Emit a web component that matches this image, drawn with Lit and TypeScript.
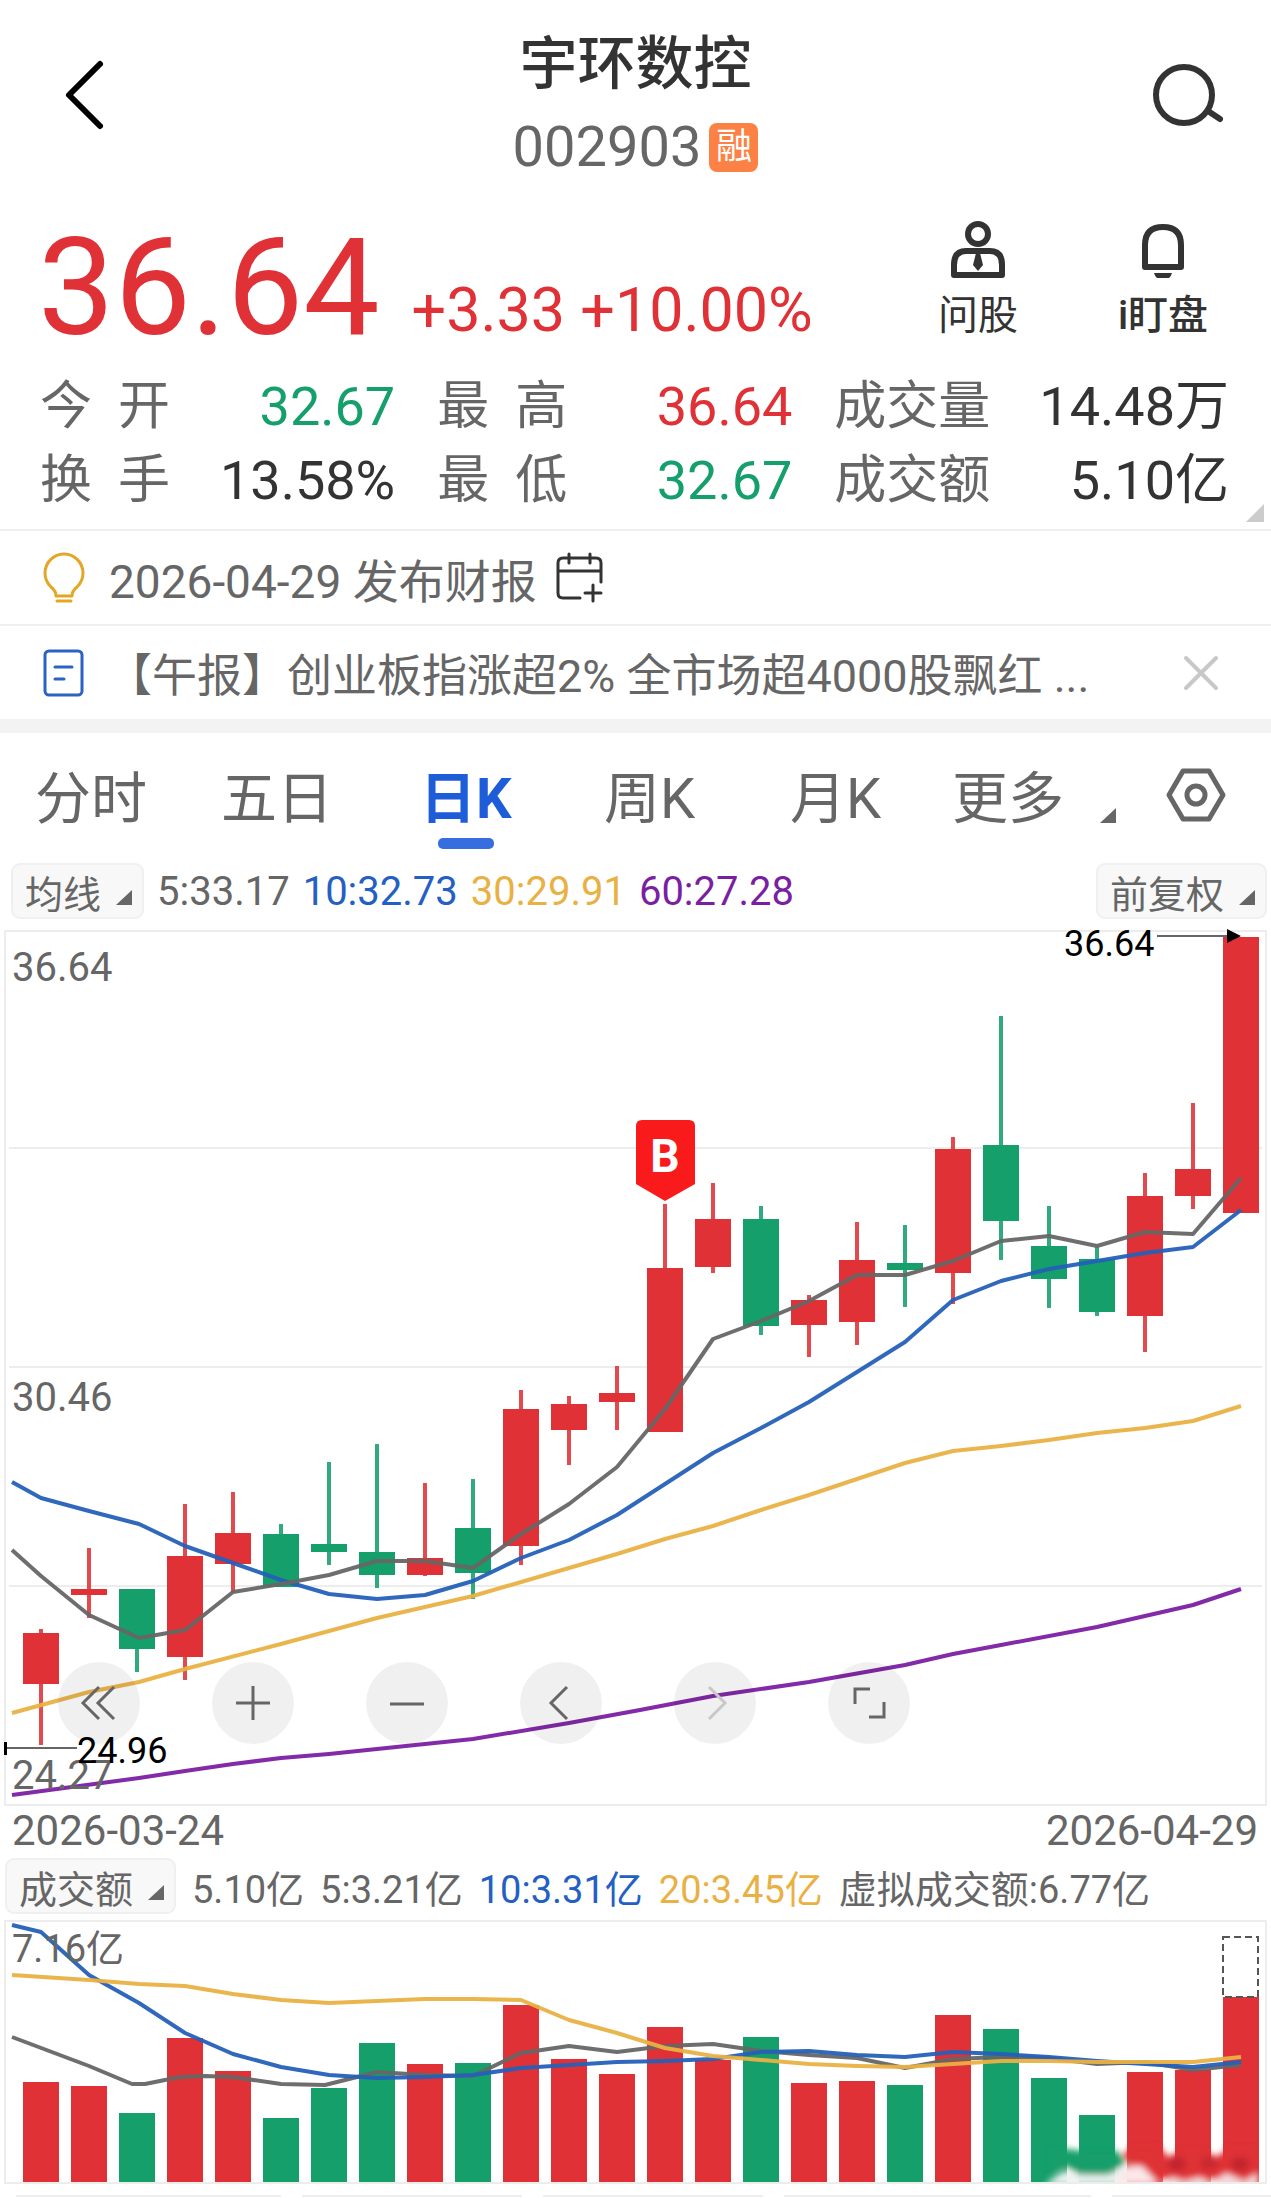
import { LitElement, html, svg, css } from "lit";
import { customElement, property, state } from "lit/decorators.js";
import { classMap } from "lit/directives/class-map.js";

type Candle = [high: number, top: number, bottom: number, low: number, up: 0 | 1];
type Points = number[][];

const RED = "#df3136";
const GREEN = "#149f6b";
const GRAY = "#666666";
const BLUE = "#2460b8";
const ORANGE = "#e9b143";
const PURPLE = "#7b1fa2";

const STEP = 48;
const FIRST = 41;
const BODY = 36;
const at = (i: number) => FIRST + STEP * i;
const path = (p: Points) => p.map((q) => q.join(",")).join(" ");

const candles: Candle[] = [
  [1630, 1634, 1685, 1746, 1],
  [1549, 1590, 1596, 1619, 1],
  [1590, 1590, 1650, 1673, 0],
  [1505, 1557, 1658, 1681, 1],
  [1493, 1534, 1565, 1593, 1],
  [1525, 1535, 1588, 1588, 0],
  [1463, 1545, 1553, 1566, 0],
  [1445, 1553, 1576, 1589, 0],
  [1484, 1559, 1576, 1577, 1],
  [1480, 1529, 1574, 1600, 0],
  [1391, 1410, 1547, 1566, 1],
  [1397, 1405, 1431, 1466, 1],
  [1367, 1394, 1403, 1431, 1],
  [1205, 1269, 1433, 1433, 1],
  [1184, 1220, 1268, 1274, 1],
  [1207, 1220, 1327, 1336, 0],
  [1296, 1301, 1326, 1358, 1],
  [1223, 1261, 1323, 1346, 1],
  [1226, 1264, 1271, 1308, 0],
  [1138, 1150, 1274, 1305, 1],
  [1017, 1146, 1222, 1261, 0],
  [1207, 1247, 1280, 1309, 0],
  [1248, 1260, 1313, 1317, 0],
  [1174, 1197, 1317, 1353, 1],
  [1104, 1170, 1197, 1210, 1],
  [938, 938, 1214, 1214, 1],
];

const ma5: Points = [[12, 1551], [41, 1577], [89, 1616], [139, 1639], [185, 1631], [233, 1593], [281, 1585], [329, 1576], [377, 1562], [425, 1562], [473, 1569], [521, 1535], [569, 1505], [617, 1468], [665, 1410], [713, 1340], [761, 1322], [809, 1302], [857, 1276], [905, 1276], [953, 1262], [1001, 1242], [1049, 1237], [1097, 1247], [1145, 1233], [1193, 1235], [1241, 1179]];
const ma10: Points = [[12, 1483], [41, 1499], [89, 1512], [139, 1525], [185, 1547], [233, 1564], [281, 1581], [329, 1595], [377, 1600], [425, 1596], [473, 1582], [521, 1559], [569, 1541], [617, 1516], [665, 1485], [713, 1454], [761, 1429], [809, 1403], [857, 1373], [905, 1343], [953, 1301], [1001, 1282], [1049, 1270], [1097, 1262], [1145, 1254], [1193, 1248], [1241, 1211]];
const ma30: Points = [[12, 1714], [89, 1693], [139, 1683], [185, 1670], [281, 1645], [377, 1619], [473, 1597], [569, 1569], [617, 1555], [665, 1540], [713, 1527], [761, 1511], [809, 1496], [857, 1480], [905, 1464], [953, 1452], [1001, 1447], [1049, 1441], [1097, 1434], [1145, 1429], [1193, 1422], [1241, 1407]];
const ma60: Points = [[12, 1796], [139, 1779], [185, 1772], [233, 1765], [281, 1759], [329, 1755], [473, 1740], [569, 1724], [640, 1711], [713, 1697], [809, 1683], [905, 1666], [953, 1655], [1001, 1646], [1097, 1628], [1193, 1606], [1241, 1590]];

const bars = [2083, 2087, 2114, 2039, 2072, 2119, 2089, 2044, 2065, 2064, 2006, 2060, 2075, 2028, 2061, 2038, 2084, 2082, 2086, 2016, 2030, 2079, 2116, 2073, 2071, 1998];
const vol5: Points = [[12, 2038], [89, 2067], [132, 2085], [145, 2085], [180, 2078], [205, 2077], [233, 2078], [281, 2085], [325, 2086], [377, 2073], [425, 2076], [473, 2077], [521, 2054], [569, 2047], [617, 2053], [665, 2047], [713, 2045], [761, 2052], [809, 2056], [857, 2059], [905, 2069], [953, 2060], [1001, 2058], [1049, 2059], [1097, 2065], [1145, 2063], [1193, 2071], [1241, 2066]];
const vol10: Points = [[12, 1926], [41, 1933], [89, 1976], [139, 2004], [185, 2034], [233, 2055], [281, 2068], [329, 2076], [377, 2079], [425, 2078], [473, 2076], [521, 2069], [569, 2066], [617, 2063], [665, 2062], [713, 2060], [761, 2053], [809, 2052], [857, 2056], [905, 2058], [953, 2053], [1001, 2055], [1049, 2058], [1097, 2062], [1145, 2065], [1193, 2068], [1241, 2063]];
const vol20: Points = [[12, 1976], [89, 1981], [139, 1985], [185, 1987], [233, 1995], [281, 2001], [329, 2004], [377, 2002], [425, 2000], [473, 2000], [521, 2001], [569, 2021], [617, 2034], [665, 2049], [713, 2057], [761, 2061], [809, 2065], [857, 2067], [905, 2068], [953, 2065], [1001, 2062], [1049, 2062], [1097, 2063], [1145, 2063], [1193, 2063], [1241, 2058]];

const line = (points: Points, color: string) => svg`
  <polyline points=${path(points)} fill="none" stroke=${color} stroke-width="4" stroke-linejoin="round" opacity="0.95"></polyline>`;

const corner = html`<svg class="corner" viewBox="0 0 16 15" aria-hidden="true"><path d="M0 15 16 0V15Z" fill="currentColor"></path></svg>`;

/** Candlestick chart with moving averages. */
@customElement("price-chart")
export class PriceChart extends LitElement {
  static styles = css`
    :host { display: block; position: relative; }
    svg { display: block; width: 100%; height: auto; }
    .axis { font-size: 40px; fill: #666; }
    .mark { font-size: 36px; fill: #000; }
    .flag { font-size: 46px; font-weight: 700; fill: #fff; }
    .tools { position: absolute; left: 58px; bottom: 67px; display: flex; gap: 72px; }
    .tool {
      display: grid; place-items: center; width: 82px; height: 82px; padding: 0;
      border: 0; border-radius: 50%; background: rgba(0, 0, 0, 0.06); color: #666;
    }
    .tool:disabled { color: #c8c8c8; }
    .tool svg { width: 40px; height: 40px; fill: none; stroke: currentColor; stroke-width: 3; }
  `;

  render() {
    return html`
      <svg viewBox="0 926 1271 886" role="img" aria-label="日K">
        <g fill="none" stroke="#ededed" stroke-width="2">
          <rect x="5" y="932" width="1261" height="874"></rect>
          <path d="M9 1149H1262M9 1368H1262M9 1587H1262"></path>
        </g>
        ${candles.map(([high, top, bottom, low, up], i) => svg`
          <g fill=${up ? RED : GREEN}>
            <rect x=${at(i) - 2} y=${high} width="4" height=${low - high} opacity="0.88"></rect>
            <rect x=${at(i) - BODY / 2} y=${top} width=${BODY} height=${bottom - top}></rect>
          </g>`)}
        ${line(ma60, PURPLE)} ${line(ma30, ORANGE)} ${line(ma10, BLUE)} ${line(ma5, GRAY)}
        <path d="M642 1121H689Q695 1121 695 1127V1185L665 1202L636 1185V1127Q636 1121 642 1121Z" fill="#f91b1b"></path>
        <text class="flag" x="665" y="1173" text-anchor="middle">B</text>
        <text class="axis" x="12" y="982">36.64</text>
        <text class="axis" x="12" y="1412">30.46</text>
        <text class="axis" x="12" y="1790">24.27</text>
        <text class="mark" x="1064" y="957">36.64</text>
        <path d="M1157 937H1230M7 1749H77" stroke="#666" stroke-width="2"></path>
        <path d="M1227 930 1241 937 1227 944ZM4 1743H7V1756H4Z" fill="#000"></path>
        <text class="mark" x="77" y="1764">24.96</text>
      </svg>
      <div class="tools">
        <button class="tool" aria-label="最早"><svg viewBox="0 0 40 40"><path d="M20 4 4 20 20 36M35 4 19 20 35 36"></path></svg></button>
        <button class="tool" aria-label="放大"><svg viewBox="0 0 40 40"><path d="M20 3V37M3 20H37"></path></svg></button>
        <button class="tool" aria-label="缩小"><svg viewBox="0 0 40 40"><path d="M3 21H37"></path></svg></button>
        <button class="tool" aria-label="向左"><svg viewBox="0 0 40 40"><path d="M26 4 10 20 26 36"></path></svg></button>
        <button class="tool" aria-label="向右" disabled><svg viewBox="0 0 40 40"><path d="M14 4 30 20 14 36"></path></svg></button>
        <button class="tool" aria-label="全屏"><svg viewBox="0 0 40 40"><path d="M6 21V6H21M35 19V34H20"></path></svg></button>
      </div>`;
  }
}

/** Turnover bars with moving averages. */
@customElement("volume-chart")
export class VolumeChart extends LitElement {
  static styles = css`
    :host { display: block; }
    svg { display: block; width: 100%; height: auto; }
    .axis { font-size: 38px; fill: #666; }
  `;

  render() {
    return html`
      <svg viewBox="0 1918 1271 270" role="img" aria-label="成交额">
        <defs>
          <filter id="soft" x="-10%" y="-30%" width="120%" height="160%"><feGaussianBlur stdDeviation="3"></feGaussianBlur></filter>
          <clipPath id="frame"><rect x="1030" y="2135" width="229" height="48"></rect></clipPath>
        </defs>
        <rect x="5" y="1922" width="1261" height="262" fill="none" stroke="#ededed" stroke-width="2"></rect>
        ${bars.map((top, i) => svg`
          <rect x=${at(i) - BODY / 2} y=${top} width=${BODY} height=${2183 - top} fill=${candles[i][4] ? RED : GREEN}></rect>`)}
        <rect x="1223" y="1938" width="35" height="60" fill="none" stroke="#555" stroke-width="2" stroke-dasharray="7 4"></rect>
        <g clip-path="url(#frame)">
          <g filter="url(#soft)">
            <path d="M1050 2150H1068L1082 2152 1118 2152 1126 2164 1108 2176 1080 2176 1064 2166 1050 2176Z" fill="#149f6b"></path>
            <path d="M1122 2156 1132 2148H1160L1168 2158 1180 2152H1206L1216 2158 1228 2150H1258V2180H1148L1134 2168Z" fill="#df3136"></path>
            <ellipse cx="1177" cy="2165" rx="9" ry="7" fill="#c1272f"></ellipse>
            <ellipse cx="1209" cy="2164" rx="9" ry="7" fill="#c92a31"></ellipse>
            <ellipse cx="1240" cy="2165" rx="9" ry="7" fill="#c1272f"></ellipse>
            <path d="M1044 2186 1064 2172 1082 2176 1108 2176 1126 2167H1142L1158 2186Z" fill="#eef3f1"></path>
            <path d="M1114 2186 1128 2167H1142L1160 2186Z" fill="#fbe6e8"></path>
            <path d="M1160 2188 1172 2178 1184 2182 1200 2178 1212 2184 1226 2174 1244 2182 1258 2174V2188Z" fill="#f7dcde"></path>
          </g>
        </g>
        ${line(vol5, GRAY)} ${line(vol10, BLUE)} ${line(vol20, ORANGE)}
        <text class="axis" x="12" y="1963">7.16亿</text>
      </svg>`;
  }
}

/** Small drop-down trigger with a corner mark. */
@customElement("drop-chip")
export class DropChip extends LitElement {
  @property() label = "";

  static styles = css`
    :host { display: block; }
    .chip {
      display: flex; align-items: center; gap: 15px; box-sizing: border-box; height: 56px;
      padding: 0 10px 0 12px; border: 2px solid #f0f0f0; border-radius: 9px;
      background: #f8f8f8; color: #666; font: inherit; font-size: 38px; white-space: nowrap;
    }
    .corner { width: 16px; height: 15px; margin-top: 12px; }
  `;

  render() {
    return html`<button class="chip">${this.label}${corner}</button>`;
  }
}

@customElement("app-root")
export class AppRoot extends LitElement {
  @state() private tab = "日K";
  @state() private newsOpen = true;

  private tabs = ["分时", "五日", "日K", "周K", "月K", "更多"];
  private stats = [
    ["今 开", "32.67", "down"], ["最 高", "36.64", "up"], ["成交量", "14.48万", ""],
    ["换 手", "13.58%", ""], ["最 低", "32.67", "down"], ["成交额", "5.10亿", ""],
  ];

  static styles = css`
    :host {
      display: block; background: #fff; color: #333; overflow: hidden;
      font-family: Roboto, "Noto Sans CJK SC", sans-serif;
    }
    button { padding: 0; border: 0; background: none; color: inherit; font: inherit; }
    h1, p, dl, dd { margin: 0; }
    svg { display: block; }
    .up { color: #df3136; }
    .down { color: #149f6b; }

    .top { display: grid; grid-template-columns: 1fr auto 1fr; align-items: start; padding: 26px 48px 0; }
    .nav { height: 138px; }
    .nav.back { justify-self: start; padding-left: 14px; }
    .nav.search { justify-self: end; }
    .title { text-align: center; }
    .name { font-size: 58px; font-weight: 500; line-height: 76px; }
    .code { display: flex; align-items: center; justify-content: center; gap: 8px; margin-top: 15px; font-size: 56px; line-height: 60px; color: #666; }
    .badge { width: 49px; height: 49px; border-radius: 8px; background: #fb8145; color: #fff; font-size: 36px; line-height: 49px; }

    .quote { display: flex; justify-content: space-between; padding: 41px 48px 0 38px; }
    .figures { display: flex; align-items: flex-end; gap: 32px; height: 140px; white-space: nowrap; }
    .price { font-size: 136px; line-height: 140px; }
    .change { font-size: 61px; line-height: 96px; }
    .actions { display: flex; gap: 65px; }
    .action { display: flex; flex-direction: column; align-items: center; gap: 14px; width: 120px; font-size: 40px; line-height: 48px; white-space: nowrap; }
    .action.strong { font-weight: 500; }

    .stats { position: relative; display: grid; grid-template-columns: 9fr 9fr 10fr; column-gap: 42px; padding: 12px 42px 11px 40px; border-bottom: 2px solid #efefef; line-height: 74px; }
    .stat { display: flex; justify-content: space-between; height: 74px; white-space: nowrap; }
    .stat dt { width: 156px; font-size: 52px; color: #666; }
    .stat dt.short { width: 130px; text-align-last: justify; }
    .stat dd { font-size: 54px; }
    .more { position: absolute; right: 7px; bottom: 7px; width: 18px; height: 18px; color: #ccc; }

    .row { display: flex; align-items: center; height: 93px; padding: 0 50px 0 40px; color: #666; white-space: nowrap; }
    .row.report { border-bottom: 2px solid #efefef; font-size: 46px; }
    .row.report .text { margin: 0 17px 0 19px; }
    .row.news { font-size: 45px; border-bottom: 14px solid #f3f3f3; }
    .row.news .text { flex: 1; margin: 0 24px 0 17px; color: inherit; text-decoration: none; overflow: hidden; }

    .tabs { display: grid; grid-template-columns: 186fr 199fr 184fr 186fr 162fr 214fr 60fr; padding: 30px 45px 0 35px; justify-items: start; font-size: 56px; line-height: 72px; color: #666; }
    .tab { display: grid; justify-items: center; white-space: nowrap; }
    .tab::after { content: ""; width: 56px; height: 11px; margin-top: 3px; border-radius: 5px; }
    .tab.on { color: #1d5ed8; font-weight: 700; }
    .tab.on::after { background: #366ee0; }
    .label { display: flex; gap: 36px; align-items: end; }
    .label .corner { width: 16px; height: 15px; margin-bottom: 12px; }
    .gear { align-self: start; padding-top: 4px; }

    .bar { display: flex; align-items: center; color: #666; white-space: nowrap; }
    .bar.price-bar { margin-top: 14px; padding: 0 4px 0 11px; gap: 13px; font-size: 40px; }
    .bar.volume-bar { margin-top: 7px; padding-left: 5px; gap: 16px; font-size: 38px; }
    .push { margin-left: auto; }
    .blue { color: #2460c4; }
    .orange { color: #e9b143; }
    .purple { color: #7b1fa2; }
    price-chart { margin-top: 6px; }
    .dates { display: flex; justify-content: space-between; padding: 0 13px 0 12px; font-size: 42px; line-height: 40px; color: #666; }
    volume-chart { margin-top: 3px; }
    .next { display: grid; grid-template-columns: 266fr 221fr 220fr 308fr 160fr; column-gap: 21px; height: 2px; margin: 8px 0 0 16px; }
    .edge { background: #eee; }
  `;

  render() {
    return html`
      <header class="top">
        <button class="nav back" aria-label="返回">
          <svg width="46" height="72" viewBox="0 0 46 72" fill="none" stroke="#000" stroke-width="6" stroke-linecap="round" stroke-linejoin="round"><path d="M38 5 7 36 38 67"></path></svg>
        </button>
        <div class="title">
          <h1 class="name">宇环数控</h1>
          <div class="code">002903<span class="badge">融</span></div>
        </div>
        <button class="nav search" aria-label="搜索">
          <svg width="72" height="72" viewBox="0 0 72 72" fill="none" stroke="#333" stroke-width="6" stroke-linecap="round"><circle cx="33" cy="36" r="28"></circle><path d="M57 52 69 60"></path></svg>
        </button>
      </header>

      <section class="quote">
        <div class="figures up"><span class="price">36.64</span><span class="change">+3.33 +10.00%</span></div>
        <div class="actions">
          <button class="action">
            <svg width="60" height="60" viewBox="0 0 60 60" fill="none" stroke="#333" stroke-width="6" stroke-linejoin="round"><circle cx="30" cy="16" r="10"></circle><path d="M6 57V47Q6 33 18 33H42Q54 33 54 47V57Z"></path><path d="M28 35H32L35 47 30 53 25 47Z" fill="#333" stroke="none"></path></svg>
            问股
          </button>
          <button class="action strong">
            <svg width="60" height="60" viewBox="0 0 60 60" fill="none" stroke="#333" stroke-width="6" stroke-linejoin="round"><path d="M12 49V27Q12 9 30 9T48 27V49Z"></path><path d="M21 55H39Q37 62 30 62T21 55Z" fill="#333" stroke="none"></path></svg>
            i盯盘
          </button>
        </div>
      </section>

      <dl class="stats">
        ${this.stats.map(([name, value, tone]) => html`
          <div class="stat">
            <dt class=${classMap({ short: name.includes(" ") })}>${name}</dt>
            <dd class=${tone}>${value}</dd>
          </div>`)}
        <svg class="more" viewBox="0 0 18 18" aria-hidden="true"><path d="M0 18 18 0V18Z" fill="currentColor"></path></svg>
      </dl>

      <div class="row report">
        <svg width="50" height="54" viewBox="0 0 50 54" fill="none" stroke="#e3a725" stroke-width="3" stroke-linecap="round" stroke-linejoin="round"><path d="M16 45Q16 40 11 36Q5 30 5 22A19 19 0 0 1 43 22Q43 30 37 36Q32 40 32 45Z"></path><path d="M17 50H31"></path></svg>
        <span class="text">2026-04-29 发布财报</span>
        <button aria-label="添加到日历">
          <svg width="50" height="54" viewBox="0 0 50 54" fill="none" stroke="#333" stroke-width="3" stroke-linecap="round"><path d="M26 47H9Q4 47 4 42V12Q4 7 9 7H42Q47 7 47 12V31M4 20H47M15 3V12M36 3V12M39 34V50M31 42H47"></path></svg>
        </button>
      </div>

      ${this.newsOpen ? html`
        <div class="row news">
          <svg width="50" height="54" viewBox="0 0 50 54" fill="none" stroke="#2b62c4" stroke-width="3" stroke-linecap="round"><rect x="5" y="5" width="37" height="44" rx="4"></rect><path d="M15 21H32M15 33H24"></path></svg>
          <a class="text" href="#news">【午报】创业板指涨超2% 全市场超4000股飘红 ...</a>
          <button aria-label="关闭" @click=${() => (this.newsOpen = false)}>
            <svg width="40" height="40" viewBox="0 0 40 40" stroke="#c8c8c8" stroke-width="4" stroke-linecap="round"><path d="M5 5 35 35M35 5 5 35"></path></svg>
          </button>
        </div>` : null}

      <nav class="tabs">
        ${this.tabs.map((name) => html`
          <button class=${classMap({ tab: true, on: name === this.tab })} @click=${() => (this.tab = name)}>
            <span class="label">${name}${name === "更多" ? corner : null}</span>
          </button>`)}
        <button class="gear" aria-label="设置">
          <svg width="60" height="56" viewBox="0 0 60 56" fill="none" stroke="#666" stroke-width="5" stroke-linejoin="round"><path d="M17 4H43L57 28 43 52H17L3 28Z"></path><circle cx="30" cy="28" r="9"></circle></svg>
        </button>
      </nav>

      <div class="bar price-bar">
        <drop-chip label="均线"></drop-chip>
        <span>5:33.17</span><span class="blue">10:32.73</span><span class="orange">30:29.91</span><span class="purple">60:27.28</span>
        <drop-chip class="push" label="前复权"></drop-chip>
      </div>
      <price-chart></price-chart>
      <div class="dates"><time>2026-03-24</time><time>2026-04-29</time></div>
      <div class="bar volume-bar">
        <drop-chip label="成交额"></drop-chip>
        <span>5.10亿</span><span>5:3.21亿</span><span class="blue">10:3.31亿</span><span class="orange">20:3.45亿</span><span>虚拟成交额:6.77亿</span>
      </div>
      <volume-chart></volume-chart>
      <div class="next">${[0, 1, 2, 3, 4].map(() => html`<div class="edge"></div>`)}</div>`;
  }
}
